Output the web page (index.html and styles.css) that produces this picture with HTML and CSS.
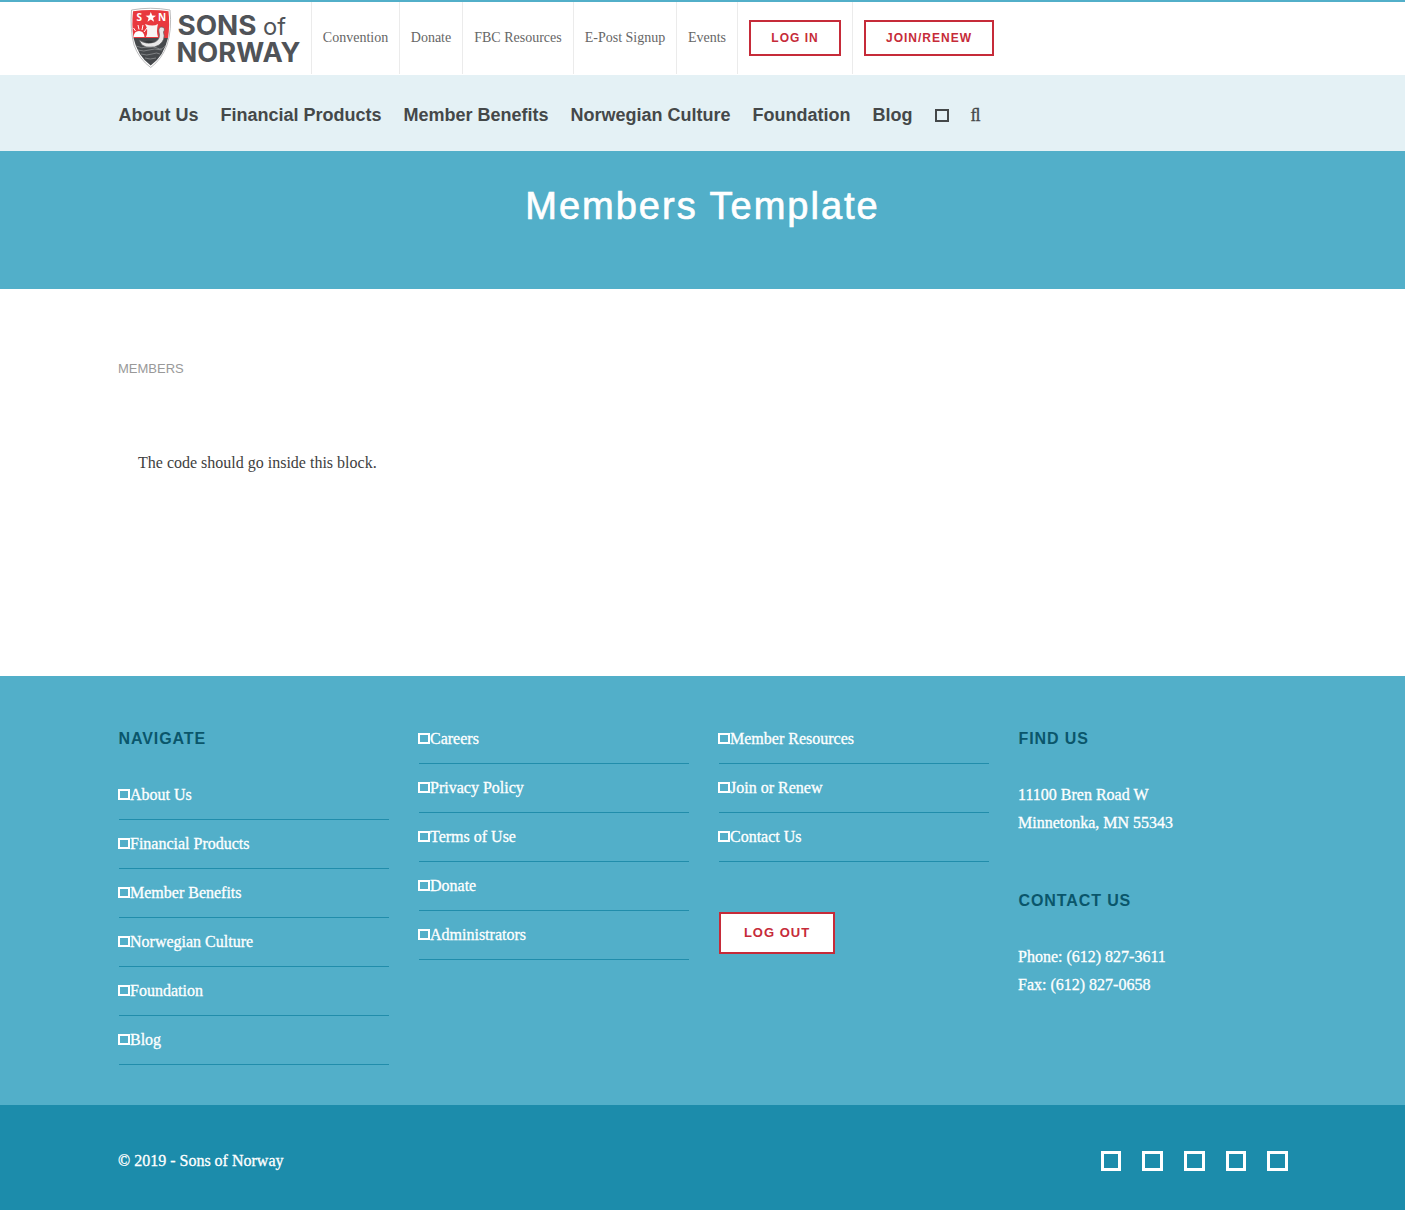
FILE: index.html
```html
<!DOCTYPE html>
<html lang="en">
<head>
<meta charset="utf-8">
<title>Members Template - Sons of Norway</title>
<link rel="stylesheet" href="styles.css">
</head>
<body>
<header>
  <div class="topbar">
    <a class="logo">
      <svg width="180" height="72" viewBox="0 0 180 72" role="img" aria-label="Sons of Norway">
        <path d="M1.500 8Q20.500 4.500 40 8Q42 28 37 43Q32 57 20.700 65.500Q9 57 4 43Q0 28 1.500 8Z" fill="#fff" stroke="#aaa9ab" stroke-width=".8"/>
        <path d="M3 9.300Q20.700 6.500 38.500 9.300Q40 24 38 36H3.500Q1.500 23 3 9.300Z" fill="#e8393e"/>
        <path d="M3.500 36H38Q34 54 20.700 63.500Q7.500 54 3.500 36Z" fill="#46494c"/>
        <path d="M3.500 35Q4 29 9 29Q14 29 14.500 35Z" fill="#fff"/>
        <path d="M3.500 26L5.500 29M8 23L9 27.500M13 23L12 28M17 26L14 30" stroke="#fff" stroke-width="1"/>
        <path d="M15 22Q23 25 28 22Q26 29 28 35H16Q19 28 15 22Z" fill="#f8f5f4"/>
        <path d="M9 38Q16 43 25 40Q31 37 29 30Q28 25 32 25Q36 26 33.500 30Q36 38 29 43Q20 48 12 43Z" fill="#e9e8e8" stroke="#5a5c5f" stroke-width=".7"/>
        <path d="M14 40Q18 37 24 40Q19 42 14 40Z" fill="#35383b"/>
        <path d="M6 44Q12 47 17 45T27 46T36 43M8 48Q14 50 19 48T32 48M11 52Q17 54 22 52T30 52M15 56Q20 58 26 56" fill="none" stroke="#a5a6a8" stroke-width=".6"/>
        <path d="M20.800 10L22.200 13.500L26 13.700L23 16L24.100 19.700L20.800 17.600L17.500 19.700L18.600 16L15.600 13.700L19.400 13.500Z" fill="#fff"/>
        <text x="6.500" y="18.500" class="shield-text">S</text><text x="28" y="18.500" class="shield-text">N</text>
        <text x="47.500" y="33" class="logo-text" textLength="79" lengthAdjust="spacingAndGlyphs">SONS</text>
        <text x="133" y="33" class="logo-of" textLength="23" lengthAdjust="spacingAndGlyphs">of</text>
        <text x="46.500" y="59.500" class="logo-text" textLength="124" lengthAdjust="spacingAndGlyphs">NORWAY</text>
      </svg>
    </a>
    <a class="top-link convention">Convention</a>
    <a class="top-link donate">Donate</a>
    <a class="top-link resources">FBC Resources</a>
    <a class="top-link signup">E-Post Signup</a>
    <a class="top-link events">Events</a>
    <div class="top-button"><a class="button login">LOG IN</a></div>
    <div class="top-button"><a class="button join">JOIN/RENEW</a></div>
  </div>
  <nav class="main-nav">
    <a>About Us</a><a>Financial Products</a><a>Member Benefits</a><a>Norwegian Culture</a><a>Foundation</a><a>Blog</a>
    <i class="nav-box"></i><span class="search">ﬂ</span>
  </nav>
</header>
<div class="banner"><h1>Members Template</h1></div>
<main>
  <div class="crumb">MEMBERS</div>
  <p>The code should go inside this block.</p>
</main>
<footer>
  <div class="columns">
    <section>
      <h2>NAVIGATE</h2>
      <ul>
        <li><i></i>About Us</li><li><i></i>Financial Products</li><li><i></i>Member Benefits</li><li><i></i>Norwegian Culture</li><li><i></i>Foundation</li><li><i></i>Blog</li>
      </ul>
    </section>
    <section>
      <ul>
        <li><i></i>Careers</li><li><i></i>Privacy Policy</li><li><i></i>Terms of Use</li><li><i></i>Donate</li><li><i></i>Administrators</li>
      </ul>
    </section>
    <section>
      <ul>
        <li><i></i>Member Resources</li><li><i></i>Join or Renew</li><li><i></i>Contact Us</li>
      </ul>
      <a class="button logout">LOG OUT</a>
    </section>
    <section>
      <h2>FIND US</h2>
      <address>11100 Bren Road W<br>Minnetonka, MN 55343</address>
      <h2>CONTACT US</h2>
      <address>Phone: (612) 827-3611<br>Fax: (612) 827-0658</address>
    </section>
  </div>
  <div class="bottom">
    <span>© 2019 - Sons of Norway</span>
    <div class="social"><i></i><i></i><i></i><i></i><i></i></div>
  </div>
</footer>
</body>
</html>
```
FILE: styles.css
```css
* { box-sizing: border-box; }
body { margin: 0; font-family: "Liberation Serif", serif; font-size: 16px; color: #404040; background: #fff; }
h1, h2, .main-nav, .button, .crumb { font-family: "Liberation Sans", sans-serif; }
h1, h2, p, ul { margin: 0; padding: 0; }
.topbar { height: 75px; border-top: 2px solid #52afc9; padding-left: 130px; display: flex; }
.logo { width: 181px; height: 72px; }
.logo svg { display: block; }
.logo-text { font: 700 26.500px Inter, sans-serif; fill: #505358; }
.logo-of { font: 400 23px Inter, sans-serif; fill: #505358; }
.shield-text { font: 700 10px "Open Sans", sans-serif; fill: #fff; }
.top-link { height: 72px; border-left: 1px solid #ebebeb; text-align: center; font-size: 14px; line-height: 71px; color: #666; white-space: nowrap; }
.convention { width: 88px; }
.donate { width: 63px; }
.resources { width: 111px; }
.signup { width: 103px; }
.events { width: 61px; }
.top-button { height: 72px; border-left: 1px solid #ebebeb; padding: 18px 11px 0; }
.button { display: flex; align-items: center; justify-content: center; border: 2px solid #c62b39; background: #fff; color: #c62b39; font-weight: 700; white-space: nowrap; }
.login, .join { height: 36px; font-size: 12px; letter-spacing: 1px; }
.login { width: 92px; }
.join { width: 130px; }
.main-nav { height: 76px; padding: 4px 0 0 118.500px; background: #e4f1f5; display: flex; align-items: center; gap: 22px; font-size: 18px; font-weight: 700; color: #444849; }
.nav-box { width: 14px; height: 13px; border: 2px solid #444849; }
.search { font: 400 18px "Liberation Serif", serif; -webkit-text-stroke: .3px #444849; }
.banner { height: 138px; padding-top: 33px; background: #52afc9; color: #fff; text-align: center; }
h1 { font-size: 38px; line-height: 44px; font-weight: 400; letter-spacing: 2px; -webkit-text-stroke: .7px #fff; }
main { height: 387px; padding: 71px 118px 0; }
.crumb { height: 16px; font-size: 13px; line-height: 17px; color: #999; }
main p { padding: 77px 20px 0; line-height: 20px; }
footer { background: #52afc9; color: #fff; -webkit-text-stroke: .3px #fff; }
.columns { height: 429px; padding: 48px 0 0 119px; display: grid; grid-template-columns: 270px 270px 270px 270px; column-gap: 30px; }
h2 { height: 56px; margin-left: -.5px; padding-top: 1px; font-size: 16px; line-height: 28px; letter-spacing: .9px; color: #0a566b; -webkit-text-stroke: 0; }
ul { list-style: none; }
li { height: 49px; display: flex; align-items: baseline; line-height: 47px; border-bottom: 1px solid #218dab; }
li:first-child { height: 40px; line-height: 29px; }
li i { width: 12px; height: 11px; margin-left: -1px; border: 2px solid #fff; }
.logout { width: 116px; height: 42px; margin-top: 50px; padding-bottom: 1px; font-size: 13px; letter-spacing: 1px; -webkit-text-stroke: 0; }
address { height: 106px; margin-left: -1px; padding-top: 1px; font-style: normal; line-height: 28px; }
.bottom { height: 105px; padding: 6px 117px 0 118px; background: #1c8cab; display: flex; align-items: center; justify-content: space-between; }
.social { display: flex; gap: 21px; }
.social i { width: 20.700px; height: 20px; border: 3px solid #fff; }
```
